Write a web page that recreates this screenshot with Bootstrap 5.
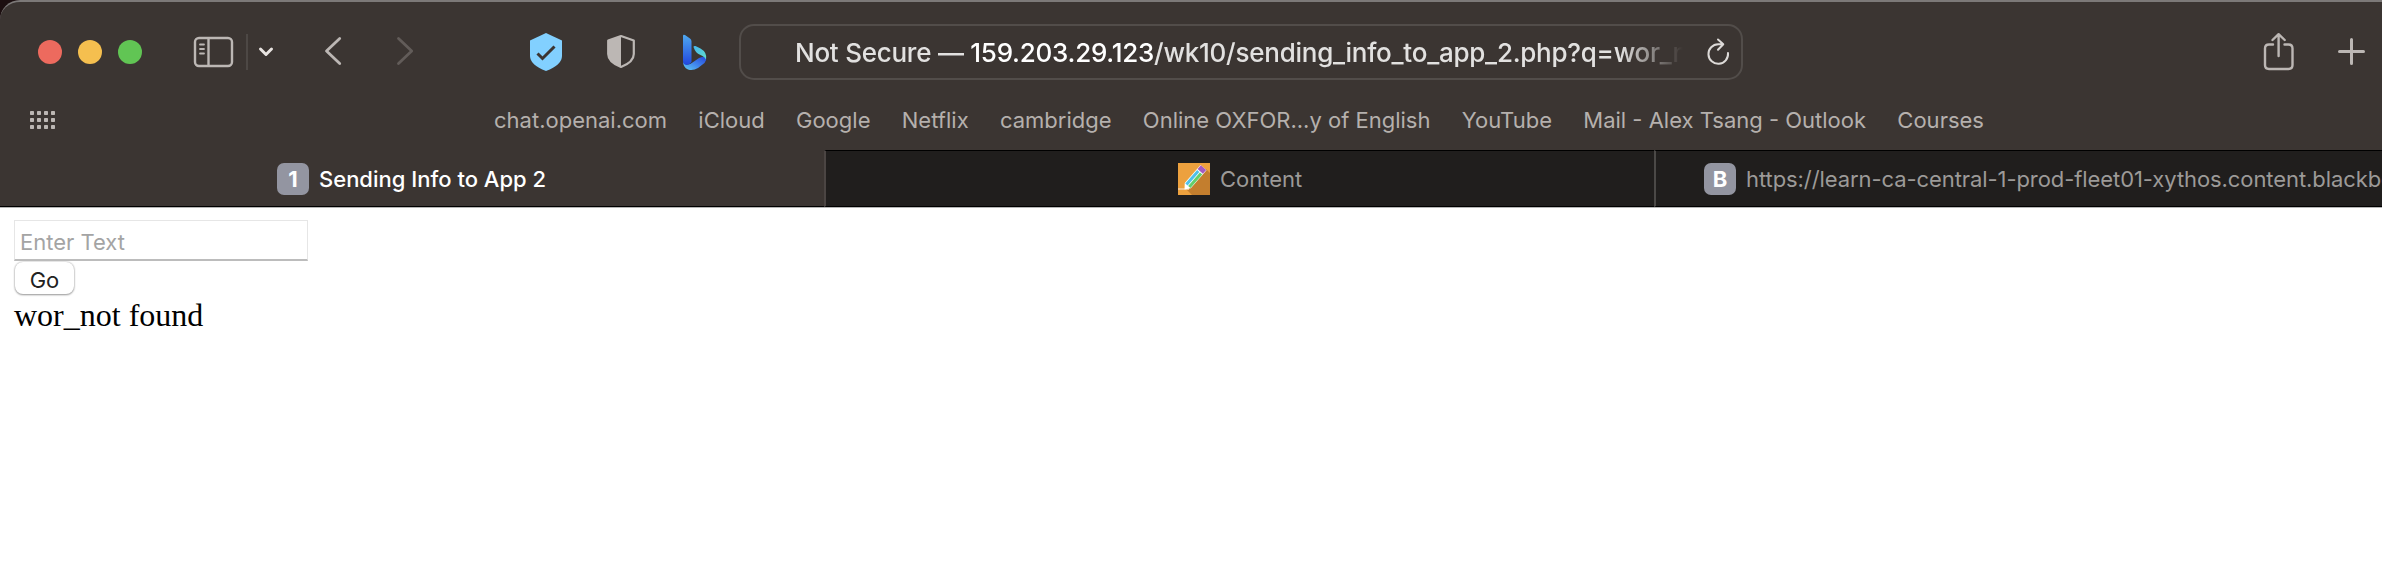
<!DOCTYPE html>
<html lang="en">
<head>
<meta charset="utf-8">
<title>Sending Info to App 2</title>
<link href="https://cdn.jsdelivr.net/npm/bootstrap@5.3.0/dist/css/bootstrap.min.css" rel="stylesheet">
<style>
body{font-family:Inter,sans-serif;font-size:22px;line-height:28px;background:#fff;overflow:hidden}
svg{display:block;flex:none}
.chrome{background:#3b3532;height:208px;border-top:2px solid #7c7978;border-top-left-radius:20px}
.corner{background:#1c0f10}
.toolbar{height:100px;padding-left:38px}
.lights{gap:16px}
.light{width:24px;height:24px;border-radius:50%}
.light-close{background:#ed6a5e}
.light-min{background:#f5bf4f}
.light-max{background:#61c554}
.vline{width:2px;height:36px;background:#4d4845}
.address{width:1004px;height:56px;border:2px solid #524d4a;border-radius:15px;font-size:26px;line-height:32px;color:#e2e1e0;font-weight:500;padding-left:54px}
.address-text{width:892px;padding-top:2px;letter-spacing:-.25px;-webkit-mask-image:linear-gradient(90deg,#000 825px,transparent 888px);mask-image:linear-gradient(90deg,#000 825px,transparent 888px)}
.bookmarks{height:36px;margin-bottom:12px;padding-left:30px;color:#b5b0ad}
.bookmarks .list{gap:31.3px;margin-left:438px}
.tabs{height:58px;border-bottom:1px solid #b5b5b5}
.tab{height:57px;border-bottom:1px solid #000}
.tab-off{background:#201e1d;border-top:1px solid #000;color:#9c9a98}
.tab-a{width:824px;color:#fff;font-weight:500;padding:2px 0 0 277px}
.tab-b{width:830px;border-left:2px solid #4b4543;padding-left:352px}
.tab-c{width:728px;border-left:2px solid #4b4947;padding-left:48px;letter-spacing:-.08px}
.tab-title{margin-left:10px}
.icon-box{width:32px;height:32px;border-radius:7px;background:#9395a1;color:#fff;font-weight:700;flex:none}
.page{padding:12px 0 0 14px}
.field{width:294px;height:41px;border:1px solid #e6e6e6;border-bottom:2px solid #bcbcbc;border-radius:0;padding:4px 0 1px 5px;font-size:22px;line-height:28px}
.field::placeholder{color:#a4a4a4;opacity:1}
.go{width:59px;height:32px;margin:1px 0 0 1px;border:0;border-radius:8px;background:#fff;box-shadow:0 0 2px #aaa,0 1px 2px #999;padding:3px 0 0;line-height:28px;font-size:22px;color:#222;display:block}
.result{font:32px/36px "Liberation Serif",serif;color:#000;margin-top:3px}
</style>
</head>
<body>
<div class="corner">
<header class="chrome">
  <div class="toolbar d-flex align-items-center">
    <div class="lights d-flex"><span class="light light-close"></span><span class="light light-min"></span><span class="light light-max"></span></div>
    <svg style="margin-left:50px" width="42" height="36" viewBox="192 33 42 36" fill="none" stroke="#bcb7b4" stroke-width="2.4"><rect x="195" y="37" width="37" height="28" rx="4"/><path d="M208.500 37V65"/><path d="M200 43.500h4M200 48h4M200 52.500h4" stroke-linecap="round" stroke-width="1.800"/></svg>
    <span class="vline" style="margin-left:12px"></span>
    <svg style="margin-left:8px" width="20" height="20" viewBox="256 42 20 20" fill="none" stroke="#e8e4e1" stroke-width="3" stroke-linecap="round" stroke-linejoin="round"><path d="M260.500 49l5.500 5.500 5.500-5.500"/></svg>
    <svg style="margin-left:44px" width="100" height="36" viewBox="320 34 100 36" fill="none" stroke-width="2.800" stroke-linecap="round" stroke-linejoin="round"><path d="M339.700 38.500L326.500 51l13.200 12.500" stroke="#bcb7b4"/><path d="M398.500 38.500L411.700 51l-13.200 12.500" stroke="#625c59"/></svg>
    <svg style="margin-left:108px" width="36" height="42" viewBox="528 31 36 42"><path d="M546 33l16 7.500V56q0 9-16 15-16-6-16-15V40.500z" fill="#82d0ff"/><path d="M537.500 53.500l5 5 12-12" fill="none" stroke="#3b3532" stroke-width="3"/></svg>
    <svg style="margin-left:41px" width="34" height="38" viewBox="605 33 34 38"><path d="M621 36l12.800 4.500V54q0 8-12.800 13-12.800-5-12.800-13V40.500z" fill="none" stroke="#bcb7b4" stroke-width="2.200" stroke-linejoin="round"/><path d="M621 36v31q-12.800-5-12.800-13V40.500z" fill="#bcb7b4"/></svg>
    <svg style="margin-left:41px" width="30" height="40" viewBox="680 32 30 40"><defs><linearGradient id="ba" x2="0" y2="1"><stop stop-color="#4fa9ef"/><stop offset="1" stop-color="#2147df"/></linearGradient><linearGradient id="bb" x2="1" y2="1"><stop stop-color="#45b5ef"/><stop offset="1" stop-color="#62dfc9"/></linearGradient><linearGradient id="bc" x1="0" y1="1" x2="1" y2="0"><stop stop-color="#60cdf4"/><stop offset=".5" stop-color="#3f83ec"/><stop offset="1" stop-color="#2545d8"/></linearGradient></defs><path d="M683 61q1 4 5 3.500 3-.5 6-3l5-3.500q5-2 7-1 1 3-1.500 6l-6.500 5q-5 3-10 1.500-5-2-5-8.500z" fill="url(#bc)"/><path d="M683 36q0-2 2-1l5 3.500q1.500 1 1.500 3V62q-2 3-5 3-3.500-.5-3.500-4z" fill="url(#ba)"/><path d="M693.500 47q0-1.500 2-1l5 2.500q7 4 5.500 11-1-2.500-3.500-3.500l-4-2q-3-1.500-5-7z" fill="url(#bb)"/></svg>
    <div class="address d-flex align-items-center" style="margin-left:29px">
      <div class="address-text overflow-hidden text-nowrap">Not Secure — <span class="text-white">159.203.29.123</span>/wk10/sending_info_to_app_2.php?q=wor_n</div>
      <svg style="margin-left:17px" width="28" height="32" viewBox="1704 35 28 32" fill="none" stroke="#dddad8" stroke-width="2" stroke-linecap="round" stroke-linejoin="round"><path d="M1728 52A9.800 9.800 0 1 1 1718.200 43.200H1723M1718 38.500l5.300 4.700-5.300 5.500"/></svg>
    </div>
    <svg style="margin-left:519px" width="34" height="42" viewBox="2262 29 34 42" fill="none" stroke="#bcb7b4" stroke-width="2.400" stroke-linecap="round" stroke-linejoin="round"><path d="M2273 42.500h-4q-4 0-4 4v16.500q0 4 4 4h19.500q4 0 4-4V46.500q0-4-4-4h-4M2278.600 54V32.500M2272.500 38l6.100-5.800 6.100 5.800"/></svg>
    <svg style="margin-left:40px" width="32" height="32" viewBox="2336 35 32 32" stroke="#bcb7b4" stroke-width="3" stroke-linecap="round"><path d="M2339.500 50.500h24M2351.500 38.500v24"/></svg>
  </div>
  <nav class="bookmarks d-flex align-items-center text-nowrap">
    <svg width="26" height="18" viewBox="0 0 26 18"><defs><pattern id="dots" width="7" height="7" patternUnits="userSpaceOnUse"><rect width="4" height="4" rx=".7" fill="#bcb7b4"/></pattern></defs><path fill="url(#dots)" d="M0 0h26v18H0z"/></svg>
    <div class="list d-flex"><span>chat.openai.com</span><span>iCloud</span><span>Google</span><span>Netflix</span><span>cambridge</span><span>Online OXFOR...y of English</span><span>YouTube</span><span>Mail - Alex Tsang - Outlook</span><span>Courses</span></div>
  </nav>
  <div class="tabs d-flex text-nowrap">
    <div class="tab tab-a d-flex align-items-center"><span class="icon-box d-flex align-items-center justify-content-center">1</span><span class="tab-title">Sending Info to App 2</span></div>
    <div class="tab tab-off tab-b d-flex align-items-center"><svg width="32" height="32" viewBox="0 0 32 32"><path fill="#eda13e" d="M0 0h32v32H0z"/><path fill="#c37e2e" d="M28 6l4 4v22H14l-6-6z"/><path fill="#f3c48d" d="M0 25h11v2H0z"/><g transform="translate(6.500 26.500) rotate(-49)"><path fill="#fff" d="M0 0l5-4h24v8H5z"/><path fill="#4fc0ea" d="M5-3.300h18v3H5z"/><path fill="#63cf6b" d="M5 .5h18v3H5z"/><path fill="#a35bc0" d="M24-3.500h5v7h-5z"/></g></svg><span class="tab-title">Content</span></div>
    <div class="tab tab-off tab-c d-flex align-items-center overflow-hidden"><span class="icon-box d-flex align-items-center justify-content-center">B</span><span class="tab-title">https://learn-ca-central-1-prod-fleet01-xythos.content.blackbo</span></div>
  </div>
</header>
</div>
<main class="page">
  <input class="field form-control" type="text" placeholder="Enter Text">
  <button class="go">Go</button>
  <div class="result">wor_not found</div>
</main>
<script src="https://cdn.jsdelivr.net/npm/bootstrap@5.3.0/dist/js/bootstrap.bundle.min.js"></script>
</body>
</html>
